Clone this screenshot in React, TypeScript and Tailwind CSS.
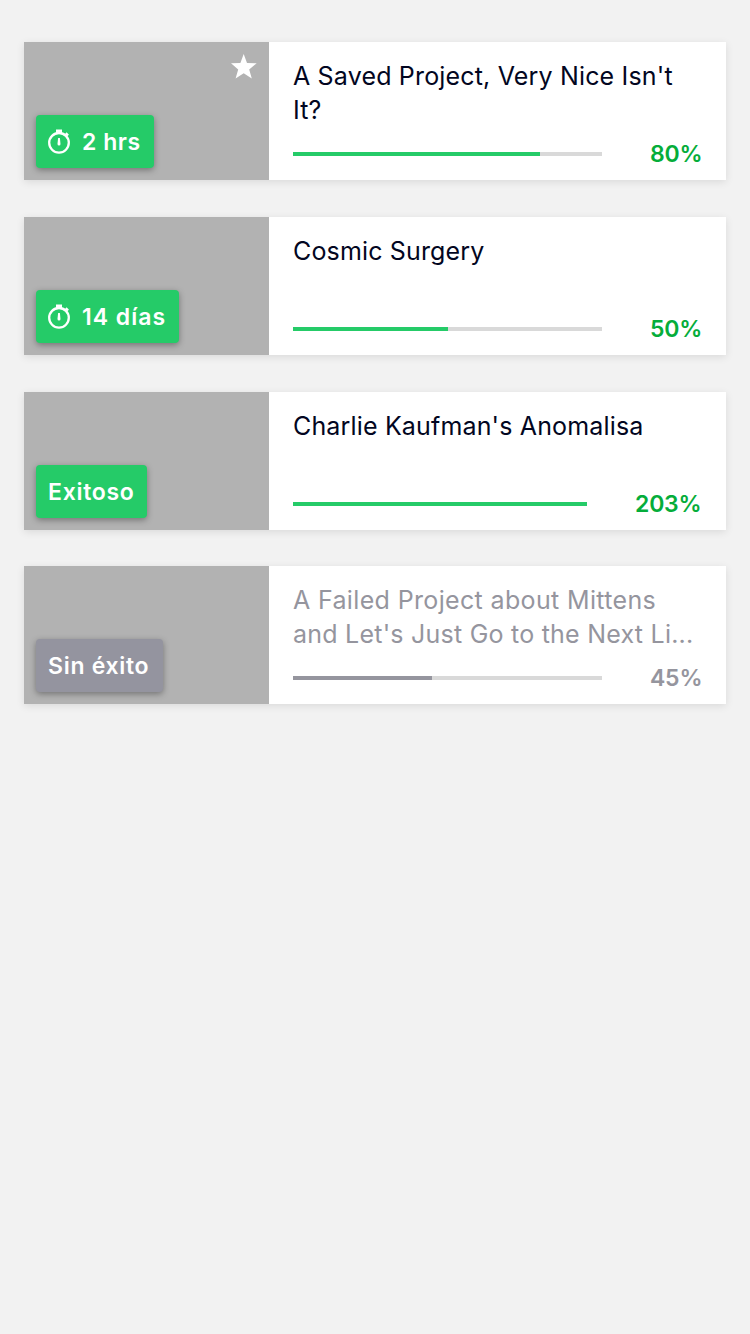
import React from "react";

type Line = { text: string; tracking: string };

type Project = {
  lines: Line[];
  percent: string;
  fill: number;
  badge: string;
  badgeStyle: string;
  timed?: boolean;
  starred?: boolean;
  failed?: boolean;
};

const projects: Project[] = [
  {
    lines: [
      { text: "A Saved Project, Very Nice Isn't", tracking: "tracking-[0.17px]" },
      { text: "It?", tracking: "tracking-[0.17px]" },
    ],
    percent: "80%",
    fill: 80,
    badge: "2 hrs",
    badgeStyle: "w-[118px] tracking-[0.55px]",
    timed: true,
    starred: true,
  },
  {
    lines: [{ text: "Cosmic Surgery", tracking: "tracking-[0.15px]" }],
    percent: "50%",
    fill: 50,
    badge: "14 días",
    badgeStyle: "w-[143px] tracking-[1px]",
    timed: true,
  },
  {
    lines: [{ text: "Charlie Kaufman's Anomalisa", tracking: "tracking-[0.16px]" }],
    percent: "203%",
    fill: 100,
    badge: "Exitoso",
    badgeStyle: "w-[111px] tracking-[0.7px]",
  },
  {
    lines: [
      { text: "A Failed Project about Mittens", tracking: "tracking-[0.35px]" },
      { text: "and Let's Just Go to the Next Li...", tracking: "tracking-[0.23px]" },
    ],
    percent: "45%",
    fill: 45,
    badge: "Sin éxito",
    badgeStyle: "w-[127px] tracking-[0.7px]",
    failed: true,
  },
];

function Stopwatch() {
  return (
    <svg width="22" height="25" viewBox="0 0 22 25" fill="none" className="mr-3 shrink-0">
      <circle cx="11" cy="13.8" r="9.8" stroke="white" strokeWidth="2.3" />
      <path d="M8 .5h6V4H8z" fill="white" />
      <path d="M17.6 6.7l2.2-2.2" stroke="white" strokeWidth="3.2" />
      <path d="M10.1 9h1.8l.6 6a1.5 1.5 0 0 1-3 0z" fill="white" />
    </svg>
  );
}

function Card({ p }: { p: Project }) {
  return (
    <article className={`flex h-[138px] bg-white shadow-[0_2px_8px_rgba(0,0,0,0.1)] ${p.failed ? "-mt-px" : ""}`}>
      <div className="flex w-[245px] shrink-0 flex-col items-start justify-between bg-[#b2b2b2] p-3">
        <div className="flex w-full justify-end">
          {p.starred && (
            <svg width="26" height="25" viewBox="0 0 26 25" className="block">
              <path fill="white" d="M12.7 0l3.3 8.9 9.7.4-7.5 6.1 2.6 9.2-8.1-5.3-8.1 5.3 2.6-9.2L0 9.3l9.4-.4z" />
            </svg>
          )}
        </div>
        <div className={`flex h-[53px] items-center rounded-[4px] pl-3 text-[23px] font-semibold whitespace-nowrap text-white shadow-[0_2px_6px_rgba(0,0,0,0.35)] ${p.badgeStyle} ${p.failed ? "bg-[#94949f]" : "bg-[#25cb68]"}`}>
          {p.timed && <Stopwatch />}
          <span className="pt-px">{p.badge}</span>
        </div>
      </div>
      <div className="flex min-w-0 grow flex-col justify-between pt-[17px] pr-6 pb-[10px] pl-6">
        <h2 className={`text-[25px] leading-[34px] whitespace-nowrap ${p.failed ? "text-[#95959e]" : "text-[#020621]"}`}>
          {p.lines.map((line) => (
            <span key={line.text} className={`block ${line.tracking}`}>{line.text} </span>
          ))}
        </h2>
        <div className="flex h-8 items-center">
          <div className="h-1 grow bg-[#d9d9d9]">
            <div className={`h-full ${p.failed ? "bg-[#95959e]" : "bg-[#25cb68]"}`} style={{ width: `${p.fill}%` }} />
          </div>
          <span className={`ml-12 shrink-0 text-[23px] leading-8 font-semibold tracking-[-0.2px] ${p.fill === 100 ? "w-[67px]" : "w-[52px]"} ${p.failed ? "text-[#95959e]" : "text-[#05ad3a]"}`}>{p.percent}</span>
        </div>
      </div>
    </article>
  );
}

export default function App() {
  return (
    <main className="flex min-h-screen flex-col gap-[37px] bg-[#f2f2f2] px-6 pt-[42px] font-['Inter',sans-serif]">
      {projects.map((p) => (
        <Card key={p.badge} p={p} />
      ))}
    </main>
  );
}
